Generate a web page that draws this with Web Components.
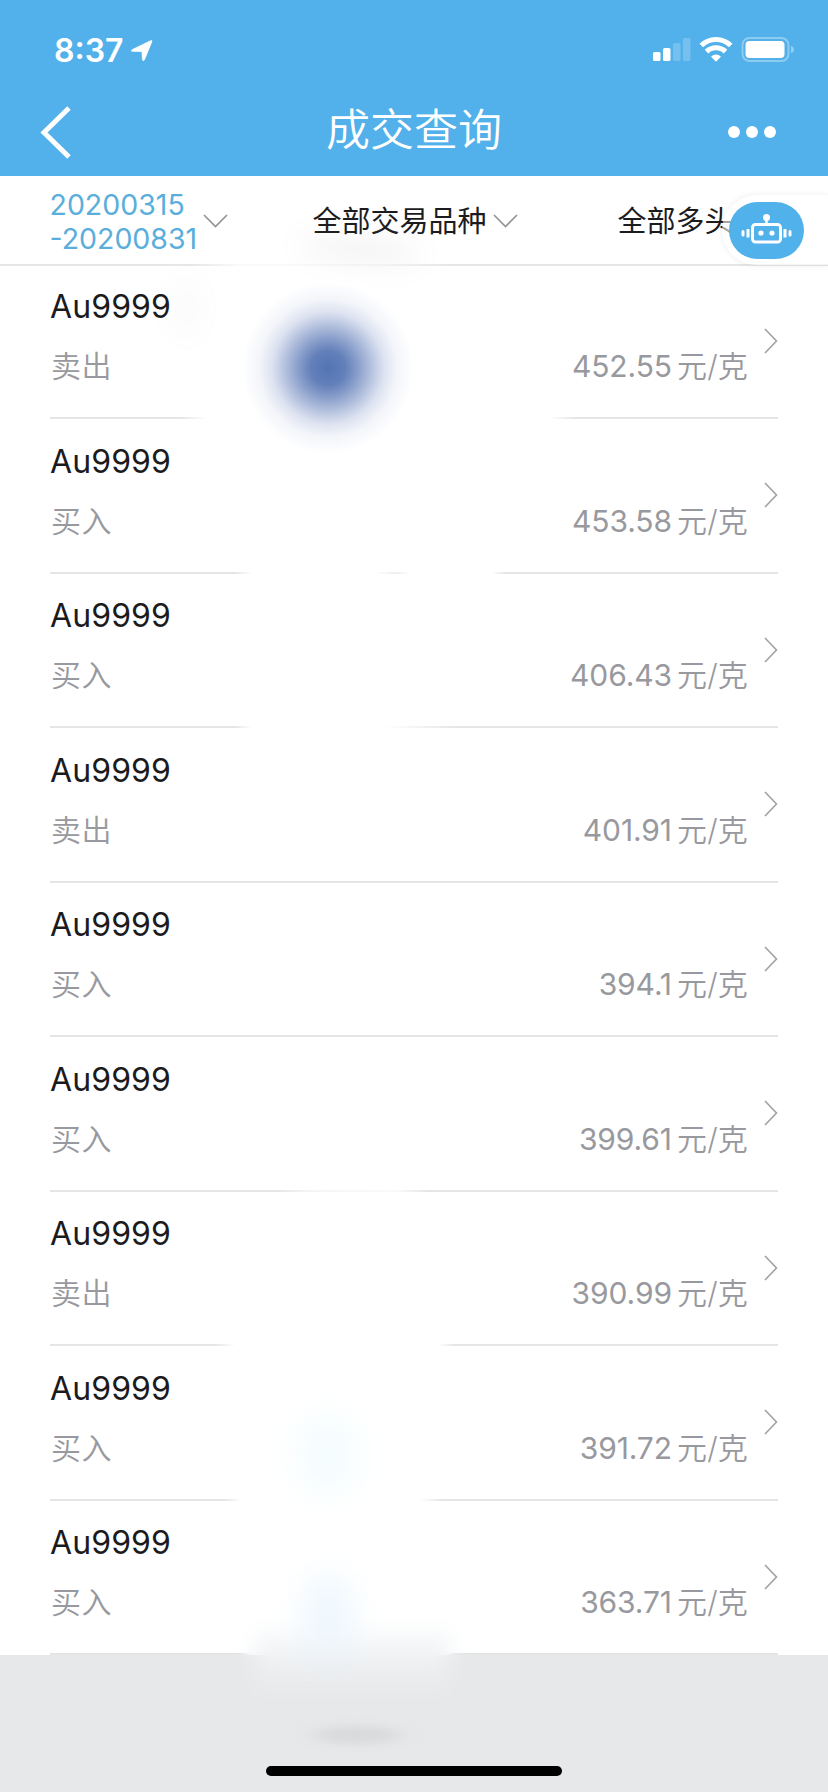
<!DOCTYPE html>
<html lang="zh-CN">
<head>
<meta charset="utf-8">
<title>成交查询</title>
<style>
html,body{margin:0;padding:0}
body{width:828px;height:1792px;overflow:hidden;background:#e6e8ea;font-family:Inter,"Noto Sans CJK SC",sans-serif}
</style>
</head>
<body>
<trade-page></trade-page>
<script>
const define = (name, html, setup) => customElements.define(name, class extends HTMLElement {
  connectedCallback() {
    if (this.shadowRoot) return;
    const t = document.createElement('template');
    t.innerHTML = html;
    this.attachShadow({mode: 'open'}).append(t.content.cloneNode(true));
    if (setup) setup(this, this.shadowRoot);
  }
});

define('status-bar', `
<style>
:host{display:flex;height:88px;box-sizing:border-box;padding:31px 34px 0 54px;justify-content:space-between;align-items:flex-start;color:#fff}
.time{display:flex;align-items:center;height:38px;font-size:32px;font-weight:600;line-height:38px;padding-top:1px}
.time svg{margin-left:8px;margin-bottom:1px}
</style>
<div class="time"><span>8:37</span><svg width="22" height="22" viewBox="0 0 22 22"><path d="M1 9.800 19.500.8q2-.8 1.200 1.200L13.500 19.700q-1.200 2.200-2.100-.2L11 11.500 2 11.300q-2.800-.2-1-1.500z" fill="#fff" stroke="#fff" stroke-width=".8"/></svg></div>
<svg width="144" height="38" viewBox="0 0 144 38">
<g fill="#fff"><rect x="3" y="21" width="7.500" height="9" rx="1.500"/><rect x="13" y="17" width="7.500" height="13" rx="1.500"/>
<g opacity=".2"><rect x="23" y="12" width="7.500" height="18" rx="1.500"/><rect x="33" y="7" width="7.500" height="23" rx="1.500"/></g></g>
<g fill="none" stroke="#fff" stroke-width="5"><path d="M51.300 14.500a21 21 0 0 1 29.400 0"/><path d="M56.500 20.600a13.500 13.500 0 0 1 19 0"/></g>
<path d="M61 25.700a7 7 0 0 1 10 0l-5 5z" fill="#fff"/>
<rect x="92.500" y="7" width="46" height="23" rx="7" fill="none" stroke="#fff" stroke-opacity=".35" stroke-width="2"/>
<rect x="95.500" y="10" width="39" height="17" rx="4" fill="#fff"/>
<path d="M141 15q3 1 3 3.500t-3 3.500z" fill="#fff" opacity=".4"/>
</svg>`);

define('nav-bar', `
<style>
:host{display:grid;grid-template-columns:120px 1fr 120px;height:88px;align-items:center;color:#fff;box-sizing:border-box}
h1{margin:0;font-size:44px;line-height:64px;font-weight:350;text-align:center;padding-bottom:5px}
.back{padding-left:38px}.more{padding-left:20px}svg{display:block}
</style>
<svg class="back" width="34" height="56" viewBox="0 0 34 56"><path d="M31 4 6 28.500 31 53" fill="none" stroke="#fff" stroke-width="5"/></svg>
<h1><slot></slot></h1>
<svg class="more" width="50" height="14" viewBox="0 0 50 14" fill="#fff"><circle cx="6" cy="7" r="6"/><circle cx="24" cy="7" r="6"/><circle cx="42" cy="7" r="6"/></svg>`);

define('filter-item', `
<style>
:host{display:flex;align-items:center;font-size:29px;line-height:34px;color:#1c1c1e;white-space:nowrap;padding-top:2px}
:host([active]){color:#5aaedb;font-size:28.500px}
span{position:relative;left:-.5px;top:.5px}
svg{margin-left:6px;flex:none}
:host([active]) svg{margin-left:5px}
</style>
<span><slot></slot></span>
<svg width="25" height="14" viewBox="0 0 25 14"><path d="M1 1 12.500 12.500 24 1" fill="none" stroke="#939598" stroke-width="1.700"/></svg>`);

define('filter-bar', `
<style>
:host{display:grid;grid-template-columns:263px 305px 1fr;height:90px;box-sizing:border-box;padding:0 0 2px 50px;overflow:hidden;
 background:linear-gradient(90deg,#e4e6e7 190px,#fafafa 240px,#f8f8f8 380px,#e4e6e7 450px) bottom/100% 2px no-repeat #fff}
</style><slot></slot>`);

define('trade-row', `
<style>
:host{display:block;height:154.500px;padding:0 50px;box-sizing:border-box;background:#fff}
:host(:first-child){height:153px}
.box{display:grid;grid-template-columns:1fr auto 30px;grid-template-rows:40px 40px;row-gap:19px;height:100%;box-sizing:border-box;padding-top:22.500px;
 background:var(--rule) bottom/100% 2px no-repeat}
:host(:first-child) .box{padding-top:21px}
.name{font-size:32px;line-height:40px;color:#1b1b1d;grid-column:1/3;letter-spacing:.1px}
.side,.price{font-size:30px;line-height:40px;color:#98999e;font-weight:350}
.side{padding-left:1px;letter-spacing:.5px}
.num{font-weight:400;letter-spacing:-.1px}
.unit{margin-left:5px;letter-spacing:.2px}
svg{grid-column:3;grid-row:1/3;align-self:center;justify-self:end;position:relative;top:4px}
</style>
<div class="box"><div class="name"><slot></slot></div>
<div class="side"></div><div class="price"><span class="num"></span><span class="unit">元/克</span></div>
<svg width="14" height="26" viewBox="0 0 14 26"><path d="M1 1 12.500 13 1 25" fill="none" stroke="#a0a1a5" stroke-width="1.600"/></svg></div>`,
(el, root) => {
  root.querySelector('.side').textContent = el.getAttribute('side');
  root.querySelector('.num').textContent = el.getAttribute('price');
});

define('assistant-button', `
<style>
:host{display:block;position:absolute;left:722px;top:195px;width:106px;height:70px;box-sizing:border-box;padding:7px 0 0 7px;border-radius:36px 0 0 36px;background:rgba(255,255,255,.6);box-shadow:0 0 6px rgba(0,0,0,.08)}
svg{display:block}
</style>
<svg width="75" height="57" viewBox="0 0 75 57"><rect width="75" height="57" rx="28.500" fill="#51b1ea"/>
<g fill="none" stroke="#fff"><rect x="23.500" y="22.500" width="28" height="17.500" rx="3" stroke-width="3"/><path d="M37.500 16v6" stroke-width="2.500"/><path d="M19 27v8.500M56 27v8.500" stroke-width="3"/><path d="M14 29.500v3.500M61 29.500v3.500" stroke-width="3" stroke-linecap="round"/></g>
<g fill="#fff"><circle cx="37.500" cy="15.500" r="3.500"/><circle cx="32" cy="31" r="2.600"/><circle cx="43" cy="31" r="2.600"/></g></svg>`);

define('privacy-smudge', `
<style>:host{display:block;position:absolute;pointer-events:none;left:0;top:0}svg{display:block}</style>
<svg width="828" height="1792" viewBox="0 0 828 1792">
<defs>
<radialGradient id="a"><stop offset="0" stop-color="#5273b2"/><stop offset=".2" stop-color="#6380ba"/><stop offset=".35" stop-color="#8a9fcb"/><stop offset=".5" stop-color="#b4c1de"/><stop offset=".65" stop-color="#dce2f0"/><stop offset=".8" stop-color="#f3f5fa"/><stop offset="1" stop-color="#fff"/></radialGradient>
<filter id="b" x="-100%" y="-150%" width="300%" height="400%"><feGaussianBlur stdDeviation="14"/></filter>
<linearGradient id="g" x2="0" y2="1"><stop offset="0" stop-color="#fff" stop-opacity="0"/><stop offset=".35" stop-color="#f4f6f8"/><stop offset=".6" stop-color="#eceef0"/><stop offset="1" stop-color="#e6e8ea" stop-opacity="0"/></linearGradient>
<filter id="c" x="-30%" y="-100%" width="160%" height="300%"><feGaussianBlur stdDeviation="10 5"/></filter>
</defs>
<ellipse cx="360" cy="250" rx="62" ry="10" transform="rotate(6 360 250)" fill="#888" opacity=".12" filter="url(#b)"/>
<ellipse cx="186" cy="308" rx="12" ry="30" fill="#999" opacity=".05" filter="url(#b)"/>
<circle cx="328" cy="368" r="86" fill="url(#a)"/>
<ellipse cx="327" cy="1455" rx="34" ry="42" fill="#f0fcff" opacity=".6" filter="url(#b)"/>
<rect x="254" y="1608" width="196" height="105" fill="url(#g)" filter="url(#c)"/>
<ellipse cx="328" cy="1615" rx="28" ry="42" fill="#e8f4fd" opacity=".65" filter="url(#b)"/>
<ellipse cx="357" cy="1735" rx="45" ry="9" fill="#cfd0d1" opacity=".6" filter="url(#c)"/>
</svg>`);

define('home-indicator', `<style>:host{display:block;position:absolute;left:266px;top:1766px;width:296px;height:10px;border-radius:5px;background:#000}</style>`);

define('trade-page', `
<style>
:host{display:block;position:relative;width:828px;height:1792px;overflow:hidden;background:#e6e8ea}
header{background:#52b0ea;height:176px}
main{display:block}
trade-row{--rule:linear-gradient(#e4e5e7,#e4e5e7)}
</style>
<header><status-bar></status-bar><nav-bar>成交查询</nav-bar></header>
<filter-bar><filter-item active>20200315<br>-20200831</filter-item><filter-item>全部交易品种</filter-item><filter-item>全部多头</filter-item></filter-bar>
<main></main>
<privacy-smudge></privacy-smudge>
<assistant-button></assistant-button>
<home-indicator></home-indicator>`,
(el, root) => {
  const c = '#e4e5e7';
  // Each stop list fades the divider out where the privacy smudge covers it.
  const fade = (a, b, d, e) => `${c} ${a}px,#fff ${b}px,#fff ${d}px,${c} ${e}px`;
  const rows = [
    ['卖出', '452.55', fade(130, 158, 500, 525)],
    ['买入', '453.58', `${c} 185px,#fff 202px,#fff 325px,#eee 345px,#fff 362px,#fff 442px,${c} 455px`],
    ['买入', '406.43', fade(185, 202, 335, 410)],
    ['卖出', '401.91'],
    ['买入', '394.1'],
    ['买入', '399.61', `${c} 225px,#f5f5f6 260px,#fafafa 345px,${c} 380px`],
    ['卖出', '390.99', fade(165, 185, 388, 405)],
    ['买入', '391.72', fade(175, 192, 370, 392)],
    ['买入', '363.71', fade(190, 204, 395, 405)]
  ];
  for (const [side, price, stops] of rows) {
    const r = document.createElement('trade-row');
    r.setAttribute('side', side);
    r.setAttribute('price', price);
    r.textContent = 'Au9999';
    if (stops) r.style.setProperty('--rule', `linear-gradient(90deg,${stops})`);
    root.querySelector('main').append(r);
  }
});
</script>
</body>
</html>
